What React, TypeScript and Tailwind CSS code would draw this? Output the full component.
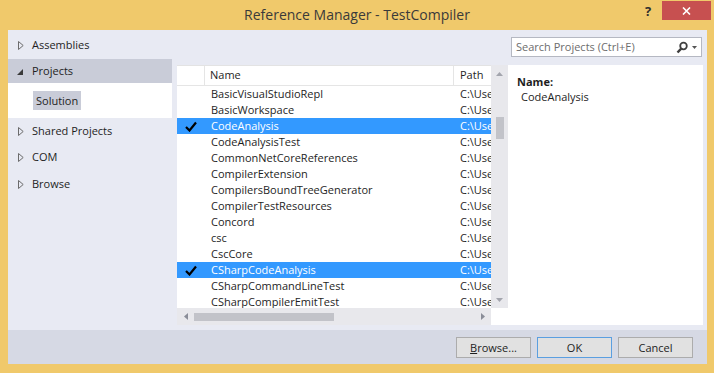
import React from "react";

const rows: { name: string; checked?: boolean }[] = [
  { name: "BasicVisualStudioRepl" },
  { name: "BasicWorkspace" },
  { name: "CodeAnalysis", checked: true },
  { name: "CodeAnalysisTest" },
  { name: "CommonNetCoreReferences" },
  { name: "CompilerExtension" },
  { name: "CompilersBoundTreeGenerator" },
  { name: "CompilerTestResources" },
  { name: "Concord" },
  { name: "csc" },
  { name: "CscCore" },
  { name: "CSharpCodeAnalysis", checked: true },
  { name: "CSharpCommandLineTest" },
  { name: "CSharpCompilerEmitTest" },
];

function RightArrow() {
  return (
    <svg width="6" height="9" viewBox="0 0 6 9" className="shrink-0">
      <polygon points="0.5,0.5 5.2,4.5 0.5,8.5" fill="none" stroke="#6b6b6b" strokeWidth="1" />
    </svg>
  );
}

function DownArrowFilled() {
  return (
    <svg width="6" height="9" viewBox="0 0 6 9" className="shrink-0">
      <polygon points="6,2 6,8 0,8" fill="#3a3a3a" />
    </svg>
  );
}

function Check() {
  return (
    <svg width="12" height="11" viewBox="0 0 12 11">
      <path d="M1 6 L4.5 9.5 L11 1.5" fill="none" stroke="#000" strokeWidth="2.2" />
    </svg>
  );
}

function NavItem({ label, h }: { label: string; h: string }) {
  return (
    <div className={`flex items-center pl-[10px] ${h}`}>
      <RightArrow />
      <span className="ml-[8px]">{label}</span>
    </div>
  );
}

export default function App() {
  return (
    <div className="w-[714px] h-[373px] bg-[#f0c96b] flex flex-col font-['Open_Sans',sans-serif] text-[11px] text-[#1e1e1e] overflow-hidden">
      {/* Title bar */}
      <div className="h-[30px] flex items-start shrink-0">
        <div className="w-[70px] shrink-0" />
        <div className="flex-1 text-center text-[14px] leading-[30px] text-[#3a3a3a]">
          Reference Manager - TestCompiler
        </div>
        <div className="w-[70px] shrink-0 flex items-start">
          <span className="w-[8px] mt-[3px] text-[13px] leading-[16px] font-bold text-[#2e2e2e] text-center">?</span>
          <div className="ml-[10px] mt-[1px] w-[49px] h-[19px] bg-[#c75050] flex items-center justify-center">
            <svg width="9" height="8" viewBox="0 0 9 8">
              <path d="M1 0.5 L8 7.5 M8 0.5 L1 7.5" stroke="#fff" strokeWidth="1.6" />
            </svg>
          </div>
        </div>
      </div>

      {/* Client area */}
      <div className="flex-1 ml-[8px] mr-[7px] mb-[9px] bg-[#e8eaf3] flex flex-col">
        <div className="flex-1 flex">
          {/* Left nav */}
          <div className="w-[164px] shrink-0 flex flex-col pt-[1px]">
            <NavItem label="Assemblies" h="h-[28px]" />
            <div className="h-[24px] bg-[#c9ccd8] flex items-center pl-[9px]">
              <DownArrowFilled />
              <span className="ml-[9px]">Projects</span>
            </div>
            <div className="h-[35px] bg-white flex items-center pl-[25px]">
              <span className="bg-[#c9ccd8] px-[3px] h-[19px] leading-[19px]">Solution</span>
            </div>
            <NavItem label="Shared Projects" h="h-[26px]" />
            <NavItem label="COM" h="h-[27px]" />
            <NavItem label="Browse" h="h-[27px]" />
          </div>

          {/* Right column */}
          <div className="flex-1 ml-[5px] mr-[4px] flex flex-col">
            <div className="h-[35px] flex justify-end items-start pt-[7px]">
              <div className="w-[191px] h-[20px] mr-[1px] bg-white border border-[#b5b8c2] flex items-center pl-[4px] pr-[4px]">
                <span className="flex-1 text-[#6d6d6d]">Search Projects (Ctrl+E)</span>
                <svg width="12" height="13" viewBox="0 0 12 13" className="mr-[4px]">
                  <circle cx="7.5" cy="5" r="3.3" fill="none" stroke="#3f3f3f" strokeWidth="1.8" />
                  <path d="M5.2 7.6 L1.5 11.5" stroke="#3f3f3f" strokeWidth="2.4" />
                </svg>
                <svg width="5" height="3" viewBox="0 0 5 3">
                  <polygon points="0,0 5,0 2.5,3" fill="#555" />
                </svg>
              </div>
            </div>

            <div className="h-[260px] flex">
              {/* List */}
              <div className="w-[331px] bg-white flex">
                <div className="w-[314px] flex flex-col">
                  <div className="h-[21px] flex border-b border-[#e5e5e5] border-t border-t-[#e3e3e3]">
                    <div className="w-[28px] border-r border-[#e5e5e5]" />
                    <div className="w-[249px] border-r border-[#e5e5e5] pl-[5px] flex items-center">Name</div>
                    <div className="flex-1 pl-[6px] flex items-center overflow-hidden">Path</div>
                  </div>
                  <div className="h-[222px] overflow-hidden flex flex-col">
                    {rows.map((r) => (
                      <div
                        key={r.name}
                        className={`h-[16px] shrink-0 flex items-center whitespace-nowrap ${
                          r.checked ? "bg-[#3399ff] text-white" : ""
                        }`}
                      >
                        <div className="w-[28px] pl-[8px] flex items-center">{r.checked ? <Check /> : null}</div>
                        <div className="w-[249px] pl-[6px]">{r.name}</div>
                        <div className="w-[37px] pl-[6px] overflow-hidden">C:\Users\</div>
                      </div>
                    ))}
                  </div>
                  {/* Horizontal scrollbar */}
                  <div className="h-[17px] bg-[#e8e8ec] flex items-center">
                    <div className="w-[17px] h-[17px] flex items-center justify-center">
                      <svg width="4" height="7" viewBox="0 0 4 7">
                        <polygon points="4,0 4,7 0,3.5" fill="#8a8d98" />
                      </svg>
                    </div>
                    <div className="w-[140px] h-[8px] bg-[#c2c3c9]" />
                    <div className="flex-1" />
                    <div className="w-[17px] h-[17px] flex items-center justify-center">
                      <svg width="4" height="7" viewBox="0 0 4 7">
                        <polygon points="0,0 0,7 4,3.5" fill="#8a8d98" />
                      </svg>
                    </div>
                  </div>
                </div>
                {/* Vertical scrollbar */}
                <div className="w-[17px] flex flex-col">
                  <div className="h-[243px] bg-[#e8e8ec] flex flex-col items-center">
                    <div className="h-[17px] w-full flex items-center justify-center">
                      <svg width="7" height="4" viewBox="0 0 7 4">
                        <polygon points="0,4 7,4 3.5,0" fill="#a3a5ad" />
                      </svg>
                    </div>
                    <div className="h-[35px]" />
                    <div className="w-[8px] h-[22px] bg-[#c2c3c9]" />
                    <div className="flex-1" />
                    <div className="h-[17px] w-full flex items-center justify-center">
                      <svg width="7" height="4" viewBox="0 0 7 4">
                        <polygon points="0,0 7,0 3.5,4" fill="#a3a5ad" />
                      </svg>
                    </div>
                  </div>
                  <div className="flex-1 bg-white" />
                </div>
              </div>

              {/* Details */}
              <div className="flex-1 bg-white pl-[9px] pt-[9px] leading-[15px]">
                <div className="font-bold">Name:</div>
                <div className="pl-[4px]">CodeAnalysis</div>
              </div>
            </div>
            <div className="h-[5px]" />
          </div>
        </div>

        {/* Bottom bar */}
        <div className="h-[34px] shrink-0 bg-[#d6d9e4] flex justify-end items-start pt-[7px] pr-[14px] gap-[6px]">
          <button className="w-[75px] h-[21px] bg-[#e1e1e1] border border-[#acacac] text-[11px] leading-[19px] text-[#1e1e1e]">
            <span className="underline">B</span>rowse...
          </button>
          <button className="w-[75px] h-[21px] bg-[#e1e1e1] border border-[#5b9fe0] text-[11px] leading-[19px] text-[#1e1e1e]">
            OK
          </button>
          <button className="w-[75px] h-[21px] bg-[#e1e1e1] border border-[#acacac] text-[11px] leading-[19px] text-[#1e1e1e]">
            Cancel
          </button>
        </div>
      </div>
    </div>
  );
}
